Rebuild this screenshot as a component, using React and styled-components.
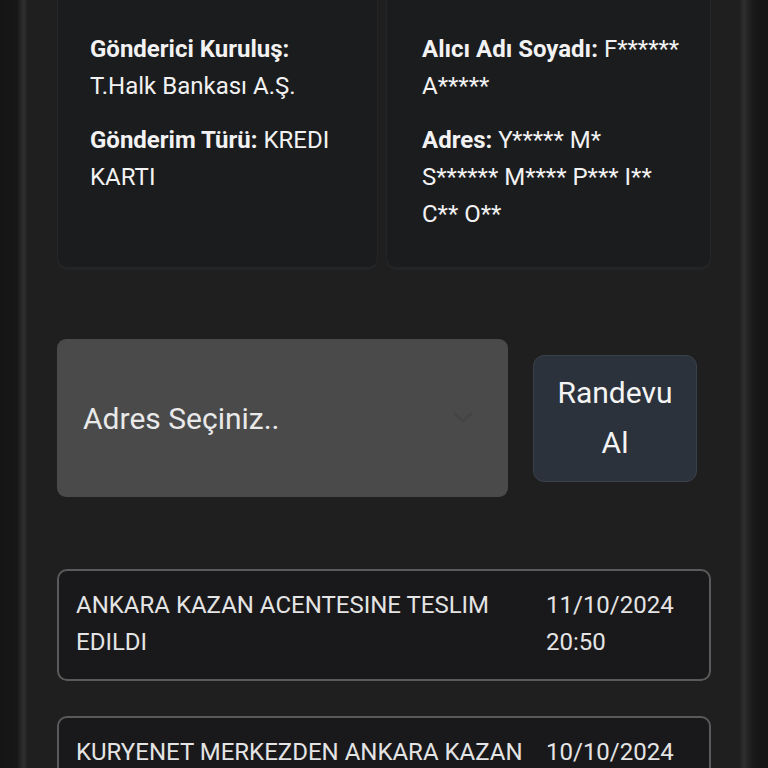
import styled, { createGlobalStyle } from 'styled-components';

const GlobalStyle = createGlobalStyle`
  html, body {
    margin: 0;
    padding: 0;
    background: #1f1f1f;
    overflow: hidden;
  }
  body {
    font-family: Roboto, 'Noto Sans', 'Liberation Sans', sans-serif;
  }
`;

const Frame = styled.div`
  display: flex;
  width: 768px;
  height: 768px;
  overflow: hidden;
  background: #1f1f1f;
`;

const Rail = styled.div`
  flex: 0 0 ${({ $right }) => ($right ? '28px' : '27px')};
  background: ${({ $right }) =>
    $right
      ? 'linear-gradient(to right, #232323 0, #2f2f2f 4px, #262626 7px, #1a1a1a 13px, #151515 20px)'
      : 'linear-gradient(to right, #151515 0, #171717 17px, #262626 21px, #303030 24px, #232323 27px)'};
`;

const Main = styled.main`
  flex: 1;
  padding: 0 29px 0 30px;
  color: #f1f1f1;
`;

const InfoGrid = styled.section`
  display: grid;
  grid-template-columns: 321px 1fr;
  gap: 8px;
  margin-top: -20px;
`;

const InfoCard = styled.div`
  background: #1b1c1e;
  border: 1px solid #242527;
  border-radius: 10px;
  box-shadow: 0 2px 0 #232426;
  padding: 50px ${({ $padRight }) => $padRight}px 34px
    ${({ $padLeft }) => $padLeft}px;
`;

const Field = styled.p`
  margin: 0 0 17px;
  font-size: 24px;
  line-height: 37px;
  color: #f2f2f2;

  &:last-child {
    margin-bottom: 0;
  }

  strong {
    font-weight: 700;
  }
`;

const ActionRow = styled.div`
  display: flex;
  align-items: center;
  gap: 25px;
  margin-top: 71px;
`;

const AddressSelect = styled.div`
  position: relative;
  width: 451px;
  height: 158px;
  display: flex;
  align-items: center;
  padding-left: 26px;
  box-sizing: border-box;
  background: #4a4a4a;
  border-radius: 9px;
  font-size: 30px;
  color: #e9e9e9;

  svg {
    position: absolute;
    right: 34px;
    top: 72px;
  }
`;

const BookButton = styled.button`
  width: 164px;
  height: 127px;
  background: #2b323b;
  border: 1px solid #3a414a;
  border-radius: 11px;
  color: #f4f4f4;
  font-family: inherit;
  font-size: 30px;
  line-height: 50px;
  text-align: center;
  padding: 0 14px;
`;

const Timeline = styled.ul`
  list-style: none;
  margin: 72px 0 0;
  padding: 0;
  display: flex;
  flex-direction: column;
  gap: 35px;
`;

const Event = styled.li`
  display: grid;
  grid-template-columns: 1fr 146px;
  gap: 16px;
  padding: 16px 17px 18px;
  background: #19191b;
  border: 2px solid #5a5a5a;
  border-radius: 10px;
  font-size: 24px;
  line-height: 37px;
  color: #e4e4e4;
`;

const events = [
  { text: 'ANKARA KAZAN ACENTESINE TESLIM EDILDI', date: '11/10/2024', time: '20:50' },
  { text: 'KURYENET MERKEZDEN ANKARA KAZAN ACENTESINE GÖNDERILDI', date: '10/10/2024', time: '18:12' },
];

const App = () => (
  <>
    <GlobalStyle />
    <Frame>
      <Rail />
      <Main>
        <InfoGrid>
          <InfoCard $padLeft={32} $padRight={30}>
            <Field>
              <strong>Gönderici Kuruluş:</strong>
              <br />
              T.Halk Bankası A.Ş.
            </Field>
            <Field>
              <strong>Gönderim Türü:</strong> KREDI KARTI
            </Field>
          </InfoCard>
          <InfoCard $padLeft={35} $padRight={29}>
            <Field>
              <strong>Alıcı Adı Soyadı:</strong> F****** A*****
            </Field>
            <Field>
              <strong>Adres:</strong> Y***** M* S****** M**** P*** I** C** O**
            </Field>
          </InfoCard>
        </InfoGrid>

        <ActionRow>
          <AddressSelect role='combobox'>
            Adres Seçiniz..
            <svg width='22' height='12' viewBox='0 0 22 12'>
              <polyline
                points='2,2 11,10 20,2'
                fill='none'
                stroke='#444444'
                strokeWidth='3'
              />
            </svg>
          </AddressSelect>
          <BookButton>Randevu Al</BookButton>
        </ActionRow>

        <Timeline>
          {events.map((ev) => (
            <Event key={ev.date}>
              <span>{ev.text}</span>
              <span>
                {ev.date}
                <br />
                {ev.time}
              </span>
            </Event>
          ))}
        </Timeline>
      </Main>
      <Rail $right />
    </Frame>
  </>
);

export default App;
